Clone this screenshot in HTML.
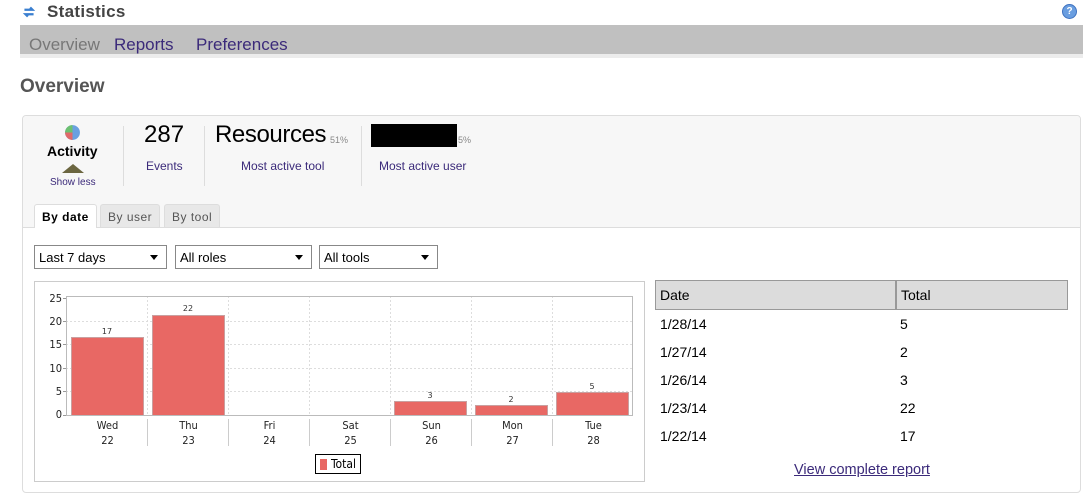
<!DOCTYPE html>
<html><head><meta charset="utf-8"><style>
*{margin:0;padding:0;box-sizing:border-box}
body{width:1087px;height:501px;background:#fff;font-family:"Liberation Sans",Arial,sans-serif;position:relative;overflow:hidden;color:#000}
.a{position:absolute}
.pur{color:#3b2a7a}
.sel{position:absolute;top:245px;height:24px;border:1px solid #888;background:#fff;font-size:13px;padding:4px 0 0 4px}
.sel:after{content:"";position:absolute;right:8px;top:9px;border-left:4px solid transparent;border-right:4px solid transparent;border-top:5px solid #000}
.tab{position:absolute;top:204px;height:23px;font-size:12px;padding:5px 7px 0;border:1px solid #ddd;border-bottom:none;border-radius:3px 3px 0 0;background:#e8e8e8;color:#555;letter-spacing:.5px}
.ylab{position:absolute;left:40px;width:22px;text-align:right;font-size:11px;font-family:"DejaVu Sans Condensed","DejaVu Sans",sans-serif;color:#222}
.bar{position:absolute;background:#e86864;border:1px solid #c9a0a0;border-bottom:none}
.val{position:absolute;font-size:8px;width:40px;text-align:center;font-family:"DejaVu Sans",sans-serif;color:#333}
.xl{position:absolute;top:418px;width:81px;text-align:center;font-size:11px;line-height:15px;font-family:"DejaVu Sans Condensed","DejaVu Sans",sans-serif;color:#222}
.row{position:absolute;left:660px;font-size:14px}
</style></head><body>
<svg class="a" style="left:21px;top:4px" width="16" height="16" viewBox="0 0 14 14"><path d="M3 5h7l-2-2M11 9H4l2 2" stroke="#3a7fd0" stroke-width="2" fill="none"/></svg>
<div class="a" style="left:47px;top:2px;font-size:17px;font-weight:bold;color:#444;letter-spacing:.3px">Statistics</div>
<div class="a" style="left:1062px;top:4px;width:15px;height:15px;border-radius:50%;background:#6a9ee0;border:1px solid #3f72c0;color:#fff;font-size:10px;font-weight:bold;text-align:center;line-height:13px">?</div>
<div class="a" style="left:20px;top:25px;width:1063px;height:29px;background:#c0c0c0"></div>
<div class="a" style="left:20px;top:54px;width:1063px;height:4px;background:#ececec"></div>
<div class="a" style="left:29px;top:35px;font-size:17px;color:#777">Overview</div>
<div class="a pur" style="left:114px;top:35px;font-size:17px">Reports</div>
<div class="a pur" style="left:196px;top:35px;font-size:17px">Preferences</div>
<div class="a" style="left:20px;top:76px;font-size:19px;font-weight:bold;color:#555">Overview</div>
<div class="a" style="left:22px;top:115px;width:1059px;height:378px;border:1px solid #ddd;border-radius:4px;background:#fff"></div>
<div class="a" style="left:23px;top:116px;width:1057px;height:112px;background:#f7f7f7;border-bottom:1px solid #ddd;border-radius:4px 4px 0 0"></div>
<svg class="a" style="left:64px;top:124px" width="17" height="17" viewBox="0 0 16 16"><circle cx="8" cy="8" r="7" fill="#6aa0e0"/><path d="M8 8V1A7 7 0 0 0 1 8z" fill="#6cc070"/><path d="M8 8H1a7 7 0 0 0 7 7z" fill="#e06a6a"/></svg>
<div class="a" style="left:47px;top:143px;font-size:14px;font-weight:bold">Activity</div>
<div class="a" style="left:62px;top:164px;border-left:11px solid transparent;border-right:11px solid transparent;border-bottom:9px solid #6b6640"></div>
<div class="a pur" style="left:50px;top:177px;font-size:10px">Show less</div>
<div class="a" style="left:123px;top:126px;width:1px;height:60px;background:#ddd"></div>
<div class="a" style="left:144px;top:121px;font-size:24px">287</div>
<div class="a pur" style="left:146px;top:159px;font-size:12px">Events</div>
<div class="a" style="left:204px;top:126px;width:1px;height:60px;background:#ddd"></div>
<div class="a" style="left:215px;top:121px;font-size:24px;letter-spacing:-.4px">Resources</div>
<div class="a" style="left:330px;top:135px;font-size:9px;color:#888">51%</div>
<div class="a pur" style="left:241px;top:159px;font-size:12px">Most active tool</div>
<div class="a" style="left:361px;top:126px;width:1px;height:60px;background:#ddd"></div>
<div class="a" style="left:371px;top:124px;width:86px;height:23px;background:#000"></div>
<div class="a" style="left:458px;top:135px;font-size:9px;color:#888">5%</div>
<div class="a pur" style="left:379px;top:159px;font-size:12px">Most active user</div>
<div class="tab" style="left:34px;background:#fff;color:#000;font-weight:bold;height:24px">By date</div>
<div class="tab" style="left:100px">By user</div>
<div class="tab" style="left:164px">By tool</div>
<div class="sel" style="left:34px;width:133px">Last 7 days</div>
<div class="sel" style="left:175px;width:137px">All roles</div>
<div class="sel" style="left:319px;width:119px">All tools</div>
<div class="a" style="left:34px;top:281px;width:611px;height:201px;border:1px solid #ccc;background:#fff"></div>
<svg class="a" style="left:0;top:0" width="700" height="500">
<g stroke="#ddd" stroke-dasharray="2,2" stroke-width="1">
<line x1="66" x2="632" y1="321.5" y2="321.5"/><line x1="66" x2="632" y1="344.5" y2="344.5"/><line x1="66" x2="632" y1="368.5" y2="368.5"/><line x1="66" x2="632" y1="391.5" y2="391.5"/>
<line x1="147.5" x2="147.5" y1="296" y2="415"/><line x1="228.5" x2="228.5" y1="296" y2="415"/><line x1="309.5" x2="309.5" y1="296" y2="415"/><line x1="390.5" x2="390.5" y1="296" y2="415"/><line x1="471.5" x2="471.5" y1="296" y2="415"/><line x1="552.5" x2="552.5" y1="296" y2="415"/>
</g>
<rect x="66.5" y="296.5" width="566" height="119" fill="none" stroke="#bbb"/>
<g stroke="#999"><line x1="63" x2="66" y1="298.5" y2="298.5"/><line x1="63" x2="66" y1="321.5" y2="321.5"/><line x1="63" x2="66" y1="344.5" y2="344.5"/><line x1="63" x2="66" y1="368.5" y2="368.5"/><line x1="63" x2="66" y1="391.5" y2="391.5"/><line x1="63" x2="66" y1="415.5" y2="415.5"/></g>
<g stroke="#ccc"><line x1="147.5" x2="147.5" y1="419" y2="446"/><line x1="228.5" x2="228.5" y1="419" y2="446"/><line x1="309.5" x2="309.5" y1="419" y2="446"/><line x1="390.5" x2="390.5" y1="419" y2="446"/><line x1="471.5" x2="471.5" y1="419" y2="446"/><line x1="552.5" x2="552.5" y1="419" y2="446"/></g>
</svg>
<div class="ylab" style="top:292px">25</div><div class="ylab" style="top:315px">20</div><div class="ylab" style="top:338px">15</div><div class="ylab" style="top:362px">10</div><div class="ylab" style="top:385px">5</div><div class="ylab" style="top:408px">0</div>
<div class="bar" style="left:71px;top:337px;width:73px;height:78px"></div>
<div class="bar" style="left:152px;top:315px;width:73px;height:100px"></div>
<div class="bar" style="left:394px;top:401px;width:73px;height:14px"></div>
<div class="bar" style="left:475px;top:405px;width:73px;height:10px"></div>
<div class="bar" style="left:556px;top:392px;width:73px;height:23px"></div>
<div class="val" style="left:87px;top:327px">17</div><div class="val" style="left:168px;top:304px">22</div><div class="val" style="left:410px;top:391px">3</div><div class="val" style="left:491px;top:395px">2</div><div class="val" style="left:572px;top:382px">5</div>
<div class="xl" style="left:67px">Wed<br>22</div><div class="xl" style="left:148px">Thu<br>23</div><div class="xl" style="left:229px">Fri<br>24</div><div class="xl" style="left:310px">Sat<br>25</div><div class="xl" style="left:391px">Sun<br>26</div><div class="xl" style="left:472px">Mon<br>27</div><div class="xl" style="left:553px">Tue<br>28</div>
<div class="a" style="left:315px;top:454px;width:46px;height:20px;border:1px solid #000;font-size:12px;padding:2px 0 0 15px;font-family:'DejaVu Sans Condensed','DejaVu Sans',sans-serif">Total</div>
<div class="a" style="left:320px;top:459px;width:7px;height:11px;background:#e86864"></div>
<div class="a" style="left:655px;top:280px;width:413px;height:30px;background:#dcdcdc;border:1px solid #999"></div>
<div class="a" style="left:895px;top:280px;width:2px;height:30px;background:#999"></div>
<div class="a" style="left:660px;top:287px;font-size:14px">Date</div>
<div class="a" style="left:901px;top:287px;font-size:14px">Total</div>
<div class="row" style="top:316px">1/28/14</div><div class="row" style="left:900px;top:316px">5</div>
<div class="row" style="top:344px">1/27/14</div><div class="row" style="left:900px;top:344px">2</div>
<div class="row" style="top:372px">1/26/14</div><div class="row" style="left:900px;top:372px">3</div>
<div class="row" style="top:400px">1/23/14</div><div class="row" style="left:900px;top:400px">22</div>
<div class="row" style="top:428px">1/22/14</div><div class="row" style="left:900px;top:428px">17</div>
<div class="a pur" style="left:794px;top:462px;font-size:14.5px;text-decoration:underline">View complete report</div>
</body></html>
